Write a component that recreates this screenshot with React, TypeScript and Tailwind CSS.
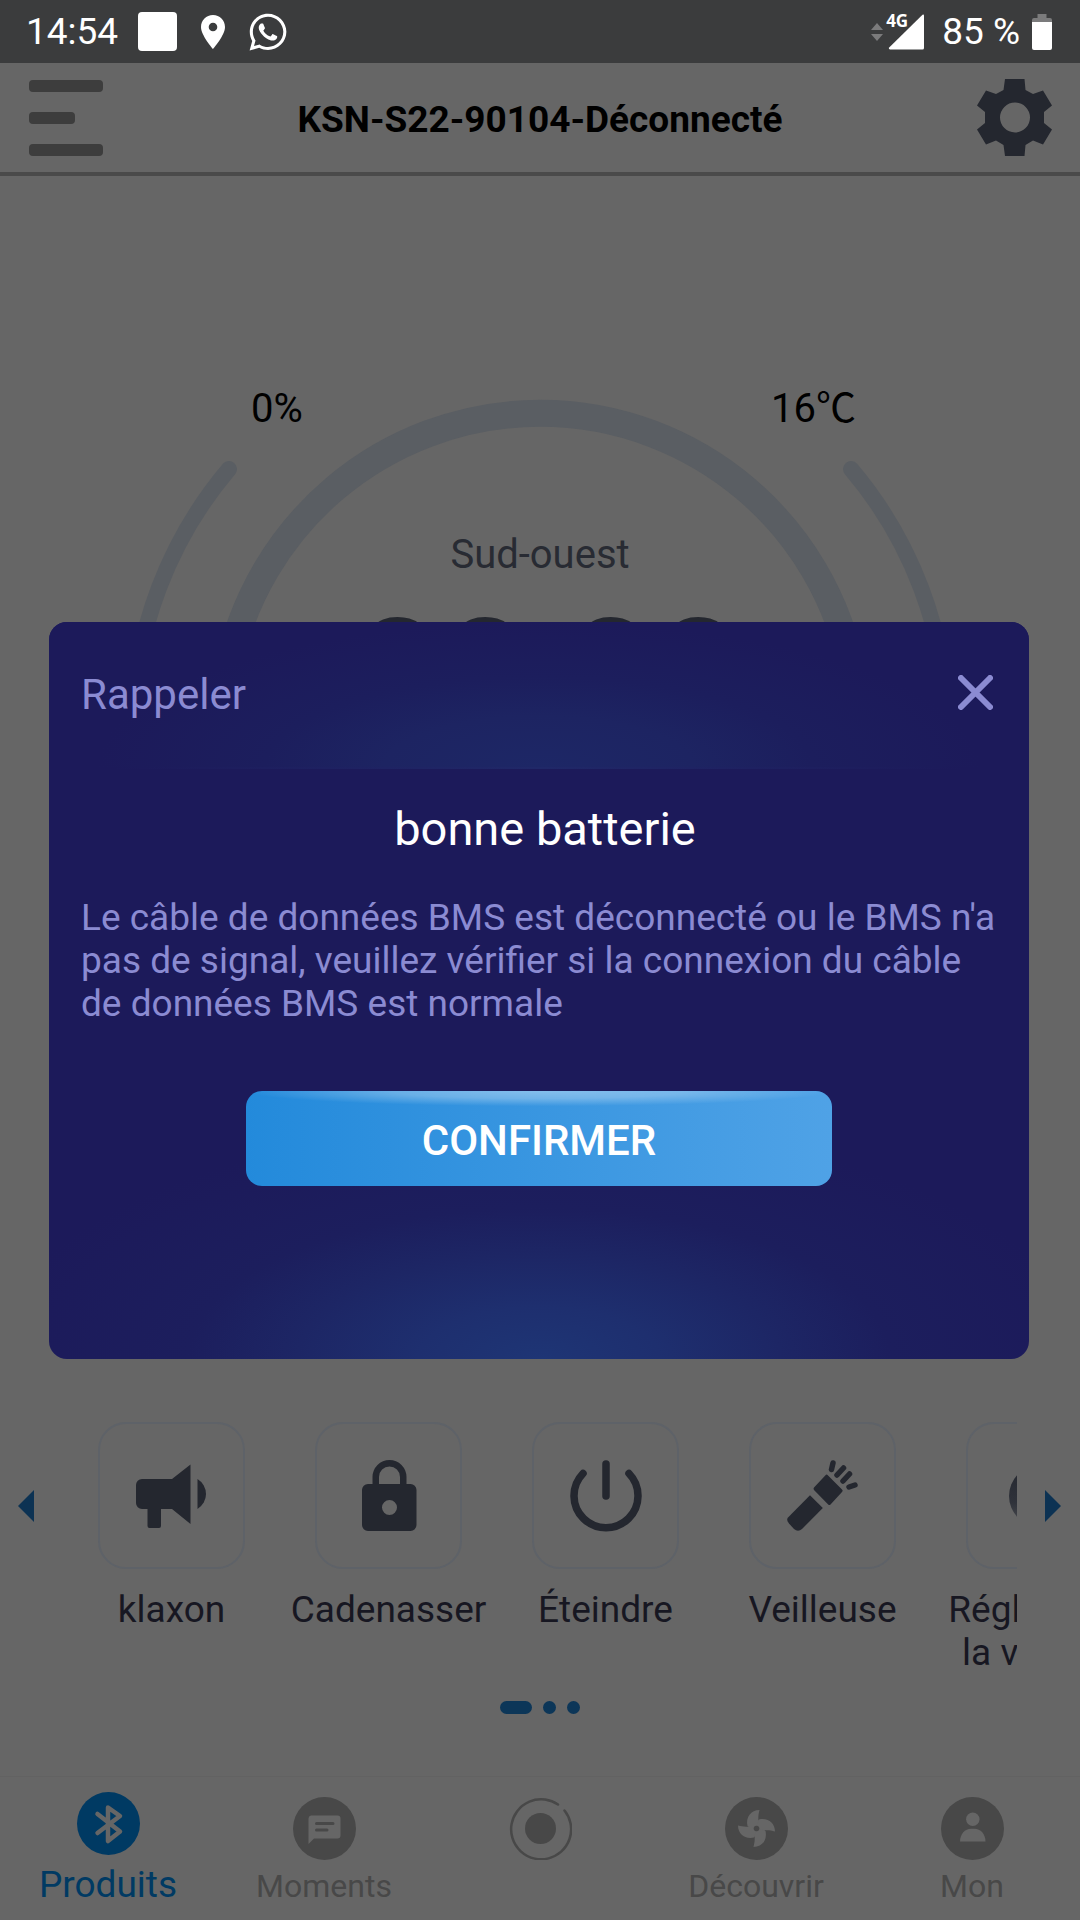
import type { ReactNode } from "react";
import { FaWhatsapp } from "react-icons/fa";

function StatusBar() {
  return (
    <div className="flex h-[63px] items-center justify-between bg-[#3b3c3d] pl-[26px] pr-7 text-[37px] leading-[43px] text-white">
      <div className="flex items-center">
        <span>14:54</span>
        <span className="ml-5 h-[39px] w-[39px] rounded-[4px] bg-white" />
        <svg className="ml-6 h-[34px] w-6" viewBox="0 0 24 34" fill="currentColor" aria-label="Position">
          <path
            fillRule="evenodd"
            d="M12 0C5.2 0 0 5.3 0 12c0 8.500 12 22 12 22s12-13.500 12-22C24 5.300 18.800 0 12 0Zm0 16.300a4.300 4.300 0 1 1 0-8.600 4.300 4.300 0 0 1 0 8.600Z"
          />
        </svg>
        <FaWhatsapp className="ml-6 h-[42px] w-[38px]" aria-label="WhatsApp" />
      </div>
      <div className="flex items-center">
        <svg className="h-[18px] w-3" viewBox="0 0 12 18" fill="#7b7b7c" aria-hidden="true">
          <path d="M6 0l6 7H0zM6 18l6-7H0z" />
        </svg>
        <div className="relative ml-[5px] h-9 w-9">
          <svg className="h-9 w-9" viewBox="0 0 36 36" fill="currentColor" aria-hidden="true">
            <path d="M36 1.500V34a1.500 1.500 0 0 1-1.500 1.500H2Q0 35 1.200 33.500L34.500 .800Q36 0 36 1.500Z" />
          </svg>
          <span className="absolute -left-[2px] -top-[1px] font-['Open_Sans'] text-[17px] font-bold leading-4">4G</span>
        </div>
        <span className="ml-[18px]">85 %</span>
        <svg className="ml-3 h-9 w-5" viewBox="0 0 20 36" aria-label="Batterie">
          <path d="M5.500 0h9v4H18a2 2 0 0 1 2 2v3H0V6a2 2 0 0 1 2-2h3.500Z" fill="#7b7b7c" />
          <path d="M0 8h20v26a2 2 0 0 1-2 2H2a2 2 0 0 1-2-2Z" fill="#fff" />
        </svg>
      </div>
    </div>
  );
}

function Header() {
  return (
    <header className="flex h-[113px] items-center justify-between border-b-4 border-[#4a4a4a] pl-[29px] pr-7">
      <button type="button" aria-label="Menu" className="flex flex-col gap-5">
        <span className="h-3 w-[74px] rounded-[4px] bg-[#3d3d3d]" />
        <span className="h-3 w-[46px] rounded-[4px] bg-[#3d3d3d]" />
        <span className="h-3 w-[74px] rounded-[4px] bg-[#3d3d3d]" />
      </button>
      <h1 className="pt-[3px] text-[37px] font-bold leading-[43px] text-black">KSN-S22-90104-Déconnecté</h1>
      <button type="button" aria-label="Paramètres">
        <svg className="h-[77px] w-[75px]" viewBox="0 0 75 77" fill="#24272f">
          <path
            fillRule="evenodd"
            d="M28 0h19.500l1 11 7.500 4 10-3.500 9 15-8 6.500v11l8 6.500-9 15-10-4-7.500 4.500-1 11H28l-1.500-11-7.500-4.500-10 4-9-15L8 44V33l-8-6.500 9-15L19 15l7.500-4ZM38 23.500a15 15 0 1 0 0 30a15 15 0 1 0 0-30Z"
          />
        </svg>
      </button>
    </header>
  );
}

function Gauge() {
  return (
    <section className="relative flex-1 pt-[209px]">
      <svg
        className="absolute inset-x-0 top-0 w-full"
        viewBox="0 0 1080 900"
        fill="none"
        stroke="#5a5e63"
        strokeLinecap="round"
        aria-hidden="true"
      >
        <path d="M265 715A318 318 0 1 1 815 715" strokeWidth="27" />
        <path d="M229 293A407 407 0 0 0 229 819" strokeWidth="16" />
        <path d="M851 293A407 407 0 0 1 851 819" strokeWidth="16" />
      </svg>
      <div className="relative flex flex-col">
        <div className="flex justify-between pl-[251px] pr-[224px] font-[Roboto,'Noto_Sans_CJK_JP',sans-serif] text-[40px] leading-[47px] text-black">
          <span>0%</span>
          <span>16℃</span>
        </div>
        <p className="mt-[99px] text-center text-[40px] leading-[47px] text-[#282b33]">Sud-ouest</p>
        <p className="mt-5 pl-4 text-center text-[156px] leading-none text-[#24272f]">00:00</p>
      </div>
    </section>
  );
}

function HornIcon() {
  return (
    <svg className="size-[72px]" viewBox="0 0 72 72" fill="#24272f" aria-hidden="true">
      <path d="M6 19H36L54.500 4.500V64L36 49H25V66a2 2 0 0 1-2 2H13.500a2 2 0 0 1-2-2V49H6a6 6 0 0 1-6-6V25a6 6 0 0 1 6-6Z" />
      <path d="M61.500 19a17.500 17.500 0 0 1 0 30Z" />
    </svg>
  );
}

function LockIcon() {
  return (
    <svg className="size-[72px]" viewBox="0 0 72 72" fill="#24272f" aria-hidden="true">
      <path
        fillRule="evenodd"
        d="M15 24H19.500V17a17 17 0 0 1 34 0V24H57.500a6 6 0 0 1 6 6V65a6 6 0 0 1-6 6H15a6 6 0 0 1-6-6V30a6 6 0 0 1 6-6ZM26 24H47V17a10.500 10.500 0 0 0-21 0ZM36.500 40a7.500 7.500 0 1 0 0 15a7.500 7.500 0 1 0 0-15Z"
      />
    </svg>
  );
}

function PowerIcon() {
  return (
    <svg
      className="size-[72px]"
      viewBox="0 0 72 72"
      fill="none"
      stroke="#24272f"
      strokeWidth="7.500"
      strokeLinecap="round"
      aria-hidden="true"
    >
      <path d="M13 13.500A32 32 0 1 0 59 13.500" />
      <path d="M36 4V36" />
    </svg>
  );
}

function TorchIcon() {
  return (
    <svg className="size-[72px]" viewBox="0 0 72 72" fill="#24272f" aria-hidden="true">
      <path d="M23 35.300L35.800 48L15 69Q11 72.500 7 69L2 63.500Q-1 60 1 57.500Z" />
      <path d="M38.500 15.200Q39.600 14 40.800 15.200L55 29.500Q56.500 30.700 55 32L43.500 44.500Q42.400 45.500 41.200 44.500L27 30Q26 28.700 27 27.500Z" />
      <path
        d="M46 3L44.500 9.500M56.500 8L50 15M62.500 14L56 21M68 25L62 27"
        stroke="#24272f"
        strokeWidth="5.500"
        strokeLinecap="round"
      />
    </svg>
  );
}

function SpeedIcon() {
  return (
    <svg className="size-[72px]" viewBox="0 0 72 72" aria-hidden="true">
      <defs>
        <linearGradient id="speed" x1="0" y1="0" x2="0" y2="1">
          <stop offset="0" stopColor="#24272f" />
          <stop offset="0.600" stopColor="#2f323a" />
          <stop offset="1" stopColor="#4a4c50" />
        </linearGradient>
      </defs>
      <circle cx="36" cy="36" r="31" fill="url(#speed)" />
    </svg>
  );
}

const actions: { label: ReactNode; icon: ReactNode; key: string }[] = [
  { key: "horn", label: "klaxon", icon: <HornIcon /> },
  { key: "lock", label: "Cadenasser", icon: <LockIcon /> },
  { key: "power", label: "Éteindre", icon: <PowerIcon /> },
  { key: "torch", label: "Veilleuse", icon: <TorchIcon /> },
  {
    key: "speed",
    label: (
      <>
        Réglage de
        <br />
        la vitesse
      </>
    ),
    icon: <SpeedIcon />,
  },
];

function Carousel() {
  return (
    <section>
      <div className="flex">
        <button type="button" aria-label="Précédent" className="flex h-[168px] w-[63px] shrink-0 items-center pl-[18px]">
          <svg className="h-8 w-4" viewBox="0 0 16 32" fill="#0c3253">
            <path d="M16 0V32L0 16Z" />
          </svg>
        </button>
        <div className="flex min-w-0 flex-1 overflow-hidden">
          {actions.map((a) => (
            <button
              key={a.key}
              type="button"
              className="flex w-[217px] shrink-0 flex-col items-center gap-[19px] text-[37px] leading-[43px] text-[#171722]"
            >
              <span className="flex size-[147px] items-center justify-center rounded-[28px] border-2 border-[#5e6268]">
                {a.icon}
              </span>
              <span className="whitespace-nowrap">{a.label}</span>
            </button>
          ))}
        </div>
        <button
          type="button"
          aria-label="Suivant"
          className="flex h-[168px] w-[63px] shrink-0 items-center justify-end pr-[19px]"
        >
          <svg className="h-8 w-4" viewBox="0 0 16 32" fill="#0c3253">
            <path d="M0 0V32L16 16Z" />
          </svg>
        </button>
      </div>
      <div className="mt-[27px] mb-[62px] flex justify-center gap-[11px]">
        <span className="h-[13px] w-8 rounded-full bg-[#0c3658]" />
        <span className="size-[13px] rounded-full bg-[#0c3658]" />
        <span className="size-[13px] rounded-full bg-[#0c3658]" />
      </div>
    </section>
  );
}

function BluetoothIcon() {
  return (
    <svg className="size-[63px]" viewBox="0 0 63 63" aria-hidden="true">
      <circle cx="31.500" cy="31.500" r="31.500" fill="#003a63" />
      <path
        d="M20.500 22L43 39.500L31 49V15.500L43 24L20.500 41"
        fill="none"
        stroke="#666"
        strokeWidth="4.500"
        strokeLinecap="round"
        strokeLinejoin="round"
      />
    </svg>
  );
}

function MessageIcon() {
  return (
    <svg className="size-[63px]" viewBox="0 0 63 63" aria-hidden="true">
      <circle cx="31.500" cy="31.500" r="31.500" fill="#484848" />
      <path d="M18 18.500H44.500a3 3 0 0 1 3 3V38.500a3 3 0 0 1-3 3H21L15.500 47V21.500a3 3 0 0 1 2.500-3Z" fill="#666" />
      <path d="M23.500 26.500H40M23.500 33H34" stroke="#484848" strokeWidth="3" strokeLinecap="round" />
    </svg>
  );
}

function RecordIcon() {
  return (
    <svg className="size-[63px]" viewBox="0 0 63 63" aria-hidden="true">
      <path d="M49 7.500A30 30 0 1 0 55.500 13.500" fill="none" stroke="#484848" strokeWidth="2.500" strokeLinecap="round" />
      <circle cx="31.500" cy="31.500" r="15.500" fill="#484848" />
    </svg>
  );
}

function FanIcon() {
  const blade = "M31.500 32L22.500 29C20.500 20 26 13 34.500 13C33.500 17 33 20 33.500 24Z";
  return (
    <svg className="size-[63px]" viewBox="0 0 63 63" aria-hidden="true">
      <circle cx="31.500" cy="31.500" r="31.500" fill="#484848" />
      <g fill="#666">
        <circle cx="31.500" cy="31.500" r="8.500" />
        <path d={blade} />
        <path d={blade} transform="rotate(90 31.500 31.500)" />
        <path d={blade} transform="rotate(180 31.500 31.500)" />
        <path d={blade} transform="rotate(270 31.500 31.500)" />
      </g>
      <circle cx="31.500" cy="31.500" r="2.800" fill="#484848" />
    </svg>
  );
}

function PersonIcon() {
  return (
    <svg className="size-[63px]" viewBox="0 0 63 63" aria-hidden="true">
      <circle cx="31.500" cy="31.500" r="31.500" fill="#484848" />
      <circle cx="31.800" cy="22.300" r="6.700" fill="#666" />
      <path d="M19 44.500C19 37 24 31.700 30 31.700H33.500C39.500 31.700 44.500 37 44.500 44.500Z" fill="#666" />
    </svg>
  );
}

const tabs = [
  { label: "Moments", icon: <MessageIcon /> },
  { label: "", icon: <RecordIcon /> },
  { label: "Découvrir", icon: <FanIcon /> },
  { label: "Mon", icon: <PersonIcon /> },
];

function BottomNav() {
  return (
    <nav className="grid h-36 grid-cols-5 border-t border-[#626262] pb-[14px]">
      <a href="#produits" className="flex flex-col items-center justify-end gap-2 text-[37px] leading-[43px] text-[#003a63]">
        <BluetoothIcon />
        <span>Produits</span>
      </a>
      {tabs.map((t, i) => (
        <a
          key={i}
          href="#"
          aria-label={t.label || "Accueil"}
          className="flex flex-col items-center justify-end gap-[7px] pb-px text-[32px] leading-[38px] text-[#484848]"
        >
          {t.icon}
          <span className="h-[38px]">{t.label}</span>
        </a>
      ))}
    </nav>
  );
}

function Dialog() {
  return (
    <div className="absolute inset-x-0 bottom-0 top-[60px] flex items-center pl-[49px] pr-[51px]">
      <div
        role="dialog"
        aria-labelledby="dialog-title"
        className="w-full overflow-hidden rounded-[18px] bg-[#1c1a5a] bg-[radial-gradient(ellipse_56%_32%_at_50%_100%,#1e3575_0%,#1e2f6f_22%,#1d2665_44%,#1c1e5d_64%,#1c1a5a_100%)]"
      >
        <div className="flex h-[145px] items-center justify-between bg-[radial-gradient(ellipse_45%_100%_at_50%_100%,#1d2766_0%,#1d2462_35%,#1c1e5d_62%,#1c1a5a_100%)] pl-8 pr-9 text-[#8b8bd2]">
          <h2 id="dialog-title" className="text-[42px] leading-[49px]">
            Rappeler
          </h2>
          <button type="button" aria-label="Fermer" className="pb-1">
            <svg className="size-[35px]" viewBox="0 0 35 35" stroke="currentColor" strokeWidth="6" strokeLinecap="round">
              <path d="M3 3L32 32M32 3L3 32" />
            </svg>
          </button>
        </div>
        <div className="mx-16 h-[2px] bg-[linear-gradient(90deg,transparent,#202868_50%,transparent)]" />
        <div className="flex flex-col px-8 pb-[173px]">
          <p className="mt-8 pl-3 text-center text-[47px] leading-[55px] text-white">bonne batterie</p>
          <p className="mt-10 text-[37px] leading-[43px] text-[#8b8bd2]">
            Le câble de données BMS est déconnecté ou le BMS n'a pas de signal, veuillez vérifier si la connexion du câble
            de données BMS est normale
          </p>
          <button
            type="button"
            className="mt-[66px] h-[95px] w-[586px] self-center rounded-[16px] bg-[radial-gradient(ellipse_50%_16%_at_50%_0%,rgba(255,255,255,0.38)_0%,rgba(255,255,255,0.28)_50%,transparent_100%),linear-gradient(90deg,#238adb,#4fa2e6)] pt-1 text-[42px] font-medium leading-[49px] text-white"
          >
            CONFIRMER
          </button>
        </div>
      </div>
    </div>
  );
}

export default function App() {
  return (
    <div className="relative flex min-h-screen flex-col bg-[#666] font-[Roboto,sans-serif]">
      <StatusBar />
      <Header />
      <Gauge />
      <Carousel />
      <BottomNav />
      <Dialog />
    </div>
  );
}
